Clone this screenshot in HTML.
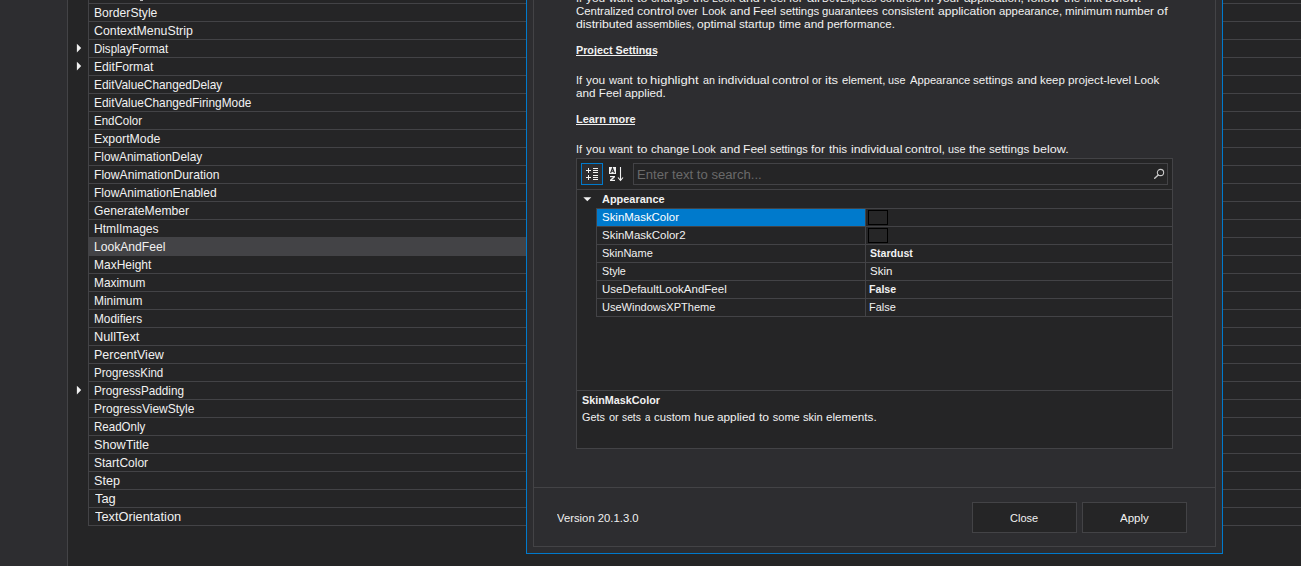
<!DOCTYPE html>
<html><head><meta charset="utf-8"><title>Look and Feel Settings</title>
<style>
html,body{margin:0;padding:0}
body{width:1301px;height:566px;overflow:hidden;background:#252526;position:relative;font-family:"Liberation Sans",sans-serif;}
div{box-sizing:border-box}
.a{position:absolute}
.t{position:absolute;white-space:pre;line-height:20px;height:20px;transform-origin:0 0;font-family:"Liberation Sans",sans-serif;}
</style></head><body>
<!-- left environment strip -->
<div class="a" style="left:0;top:0;width:67px;height:566px;background:#2d2d30"></div>
<div class="a" style="left:67px;top:0;width:1px;height:566px;background:#434346"></div>
<!-- property grid behind dialog -->
<div class="a" style="left:88px;top:3px;width:1213px;height:523px;background:repeating-linear-gradient(to bottom,#434346 0,#434346 1px,transparent 1px,transparent 18px)"></div>
<div class="a" style="left:88px;top:0;width:1px;height:526px;background:#434346"></div>
<div class="a" style="left:88px;top:237px;width:440px;height:19px;background:#434346"></div>
<div class="a" style="left:140px;top:0;width:3px;height:1px;background:#bdbdbd"></div>
<!-- expand arrows -->
<svg class="a" style="left:76px;top:43px" width="8" height="12"><path d="M0.9 0.8 L0.9 9.4 L5.2 5.1 Z" fill="#f1f1f1"/></svg>
<svg class="a" style="left:76px;top:61px" width="8" height="12"><path d="M0.9 0.8 L0.9 9.4 L5.2 5.1 Z" fill="#f1f1f1"/></svg>
<svg class="a" style="left:76px;top:385px" width="8" height="12"><path d="M0.9 0.8 L0.9 9.4 L5.2 5.1 Z" fill="#f1f1f1"/></svg>
<!-- dialog -->
<div class="a" style="left:526px;top:-10px;width:697px;height:564px;background:#2d2d30;border:1px solid #007acc"></div>
<div class="a" style="left:533px;top:-10px;width:683px;height:557px;border:1px solid #434346"></div>
<div class="a" style="left:533px;top:487px;width:683px;height:1px;background:#434346"></div>
<!-- embedded property grid -->
<div class="a" style="left:576px;top:158px;width:597px;height:291px;background:#252526;border:1px solid #434346"></div>
<div class="a" style="left:577px;top:189px;width:595px;height:1px;background:#434346"></div>
<!-- toolbar: categorized button -->
<div class="a" style="left:581px;top:163px;width:22px;height:22px;background:#2d2d30;border:1px solid #007acc"></div>
<svg class="a" style="left:581px;top:163px" width="22" height="22" shape-rendering="crispEdges">
 <g fill="#f1f1f1">
  <rect x="5" y="7" width="5" height="1"/><rect x="7" y="5" width="1" height="5"/>
  <rect x="12" y="5" width="5" height="1"/><rect x="12" y="7" width="5" height="1"/><rect x="12" y="9" width="5" height="1"/>
  <rect x="5" y="14" width="5" height="1"/><rect x="7" y="12" width="1" height="5"/>
  <rect x="12" y="12" width="5" height="1"/><rect x="12" y="14" width="5" height="1"/><rect x="12" y="16" width="5" height="1"/>
 </g>
</svg>
<!-- toolbar: A-Z sort -->
<svg class="a" style="left:607px;top:163px" width="20" height="22">
 <rect x="2" y="4" width="7" height="7" fill="#f1f1f1"/>
 <path d="M3.6 10 L5.5 5 L7.4 10 M4.4 8.3 L6.6 8.3" stroke="#252526" stroke-width="1.1" fill="none"/>
 <rect x="3" y="13" width="5" height="1.2" fill="#f1f1f1"/><rect x="3" y="16.8" width="5" height="1.2" fill="#f1f1f1"/><path d="M7.4 13.8 L3.6 17.2" stroke="#f1f1f1" stroke-width="1.5" fill="none"/>
 <path d="M13.5 4 L13.5 17.5 M11 14.5 L13.5 17.5 L16 14.5" stroke="#f1f1f1" stroke-width="1.1" fill="none"/>
</svg>
<!-- search box -->
<div class="a" style="left:633px;top:163px;width:535px;height:22px;border:1px solid #434346"></div>
<svg class="a" style="left:1150px;top:165px" width="18" height="18">
 <circle cx="10.5" cy="7.5" r="3.15" stroke="#c8c8c8" stroke-width="1.1" fill="none"/>
 <path d="M8.2 9.9 L4.7 13.3" stroke="#c8c8c8" stroke-width="1.4" stroke-linecap="round"/>
</svg>
<!-- category row -->
<svg class="a" style="left:582px;top:196px" width="12" height="8"><path d="M1.3 1.3 L9.3 1.3 L5.3 5.3 Z" fill="#f1f1f1"/></svg>
<!-- rows -->
<div class="a" style="left:596px;top:208px;width:576px;height:109px;border-left:1px solid #434346;background:repeating-linear-gradient(to bottom,#434346 0,#434346 1px,transparent 1px,transparent 18px)"></div>
<div class="a" style="left:865px;top:208px;width:1px;height:109px;background:#434346"></div>
<div class="a" style="left:597px;top:209px;width:268px;height:17px;background:#007acc"></div>
<!-- color swatches -->
<div class="a" style="left:868px;top:210px;width:20px;height:15px;background:#262627;border:1px solid #000"></div>
<div class="a" style="left:868px;top:228px;width:20px;height:15px;background:#262627;border:1px solid #000"></div>
<!-- description splitter -->
<div class="a" style="left:577px;top:390px;width:595px;height:1px;background:#434346"></div>
<!-- buttons -->
<div class="a" style="left:972px;top:502px;width:105px;height:31px;background:#252526;border:1px solid #434346"></div>
<div class="a" style="left:1082px;top:502px;width:105px;height:31px;background:#252526;border:1px solid #434346"></div>
<div class="t" style="left:93.67px;top:3.00px;font-size:13px;font-weight:400;color:#f1f1f1;transform:scaleX(0.9326)">BorderStyle</div>
<div class="t" style="left:94.01px;top:21.00px;font-size:13px;font-weight:400;color:#f1f1f1;transform:scaleX(0.9497)">ContextMenuStrip</div>
<div class="t" style="left:93.71px;top:39.00px;font-size:13px;font-weight:400;color:#f1f1f1;transform:scaleX(0.8858)">DisplayFormat</div>
<div class="t" style="left:93.67px;top:57.00px;font-size:13px;font-weight:400;color:#f1f1f1;transform:scaleX(0.9328)">EditFormat</div>
<div class="t" style="left:93.69px;top:75.00px;font-size:13px;font-weight:400;color:#f1f1f1;transform:scaleX(0.9117)">EditValueChangedDelay</div>
<div class="t" style="left:93.69px;top:93.00px;font-size:13px;font-weight:400;color:#f1f1f1;transform:scaleX(0.9124)">EditValueChangedFiringMode</div>
<div class="t" style="left:93.72px;top:111.00px;font-size:13px;font-weight:400;color:#f1f1f1;transform:scaleX(0.8849)">EndColor</div>
<div class="t" style="left:93.65px;top:129.00px;font-size:13px;font-weight:400;color:#f1f1f1;transform:scaleX(0.9474)">ExportMode</div>
<div class="t" style="left:93.69px;top:147.00px;font-size:13px;font-weight:400;color:#f1f1f1;transform:scaleX(0.9132)">FlowAnimationDelay</div>
<div class="t" style="left:93.67px;top:165.00px;font-size:13px;font-weight:400;color:#f1f1f1;transform:scaleX(0.9336)">FlowAnimationDuration</div>
<div class="t" style="left:93.68px;top:183.00px;font-size:13px;font-weight:400;color:#f1f1f1;transform:scaleX(0.9220)">FlowAnimationEnabled</div>
<div class="t" style="left:94.02px;top:201.00px;font-size:13px;font-weight:400;color:#f1f1f1;transform:scaleX(0.9337)">GenerateMember</div>
<div class="t" style="left:93.67px;top:219.00px;font-size:13px;font-weight:400;color:#f1f1f1;transform:scaleX(0.9326)">HtmlImages</div>
<div class="t" style="left:93.67px;top:237.00px;font-size:13px;font-weight:400;color:#f1f1f1;transform:scaleX(0.9324)">LookAndFeel</div>
<div class="t" style="left:93.68px;top:255.00px;font-size:13px;font-weight:400;color:#f1f1f1;transform:scaleX(0.9230)">MaxHeight</div>
<div class="t" style="left:93.69px;top:273.00px;font-size:13px;font-weight:400;color:#f1f1f1;transform:scaleX(0.9119)">Maximum</div>
<div class="t" style="left:93.68px;top:291.00px;font-size:13px;font-weight:400;color:#f1f1f1;transform:scaleX(0.9179)">Minimum</div>
<div class="t" style="left:93.69px;top:309.00px;font-size:13px;font-weight:400;color:#f1f1f1;transform:scaleX(0.9112)">Modifiers</div>
<div class="t" style="left:93.62px;top:327.00px;font-size:13px;font-weight:400;color:#f1f1f1;transform:scaleX(0.9817)">NullText</div>
<div class="t" style="left:93.64px;top:345.00px;font-size:13px;font-weight:400;color:#f1f1f1;transform:scaleX(0.9603)">PercentView</div>
<div class="t" style="left:93.71px;top:363.00px;font-size:13px;font-weight:400;color:#f1f1f1;transform:scaleX(0.8879)">ProgressKind</div>
<div class="t" style="left:93.70px;top:381.00px;font-size:13px;font-weight:400;color:#f1f1f1;transform:scaleX(0.9022)">ProgressPadding</div>
<div class="t" style="left:93.68px;top:399.00px;font-size:13px;font-weight:400;color:#f1f1f1;transform:scaleX(0.9221)">ProgressViewStyle</div>
<div class="t" style="left:93.71px;top:417.00px;font-size:13px;font-weight:400;color:#f1f1f1;transform:scaleX(0.8863)">ReadOnly</div>
<div class="t" style="left:93.99px;top:435.00px;font-size:13px;font-weight:400;color:#f1f1f1;transform:scaleX(0.9734)">ShowTitle</div>
<div class="t" style="left:94.02px;top:453.00px;font-size:13px;font-weight:400;color:#f1f1f1;transform:scaleX(0.9249)">StartColor</div>
<div class="t" style="left:93.99px;top:471.00px;font-size:13px;font-weight:400;color:#f1f1f1;transform:scaleX(0.9686)">Step</div>
<div class="t" style="left:94.95px;top:489.00px;font-size:13px;font-weight:400;color:#f1f1f1;transform:scaleX(0.9912)">Tag</div>
<div class="t" style="left:94.95px;top:507.00px;font-size:13px;font-weight:400;color:#f1f1f1;transform:scaleX(0.9852)">TextOrientation</div>
<div class="t" style="left:576.40px;top:-12.00px;font-size:11px;font-weight:400;color:#f1f1f1;transform:scaleX(0.9951)">If</div>
<div class="t" style="left:586.06px;top:-12.00px;font-size:11px;font-weight:400;color:#f1f1f1;transform:scaleX(1.0844)">you</div>
<div class="t" style="left:609.00px;top:-12.00px;font-size:11px;font-weight:400;color:#f1f1f1;transform:scaleX(1.0119)">want</div>
<div class="t" style="left:636.76px;top:-12.00px;font-size:11px;font-weight:400;color:#f1f1f1;transform:scaleX(1.1362)">to</div>
<div class="t" style="left:650.67px;top:-12.00px;font-size:11px;font-weight:400;color:#f1f1f1;transform:scaleX(1.0591)">change</div>
<div class="t" style="left:692.77px;top:-12.00px;font-size:11px;font-weight:400;color:#f1f1f1;transform:scaleX(1.0712)">the</div>
<div class="t" style="left:712.36px;top:-12.00px;font-size:11px;font-weight:400;color:#f1f1f1;transform:scaleX(0.9609)">Look</div>
<div class="t" style="left:739.23px;top:-12.00px;font-size:11px;font-weight:400;color:#f1f1f1;transform:scaleX(1.1328)">and</div>
<div class="t" style="left:762.76px;top:-12.00px;font-size:11px;font-weight:400;color:#f1f1f1;transform:scaleX(1.0734)">Feel</div>
<div class="t" style="left:789.27px;top:-12.00px;font-size:11px;font-weight:400;color:#f1f1f1;transform:scaleX(1.0640)">for</div>
<div class="t" style="left:806.61px;top:-12.00px;font-size:11px;font-weight:400;color:#f1f1f1;transform:scaleX(1.1795)">all</div>
<div class="t" style="left:822.40px;top:-12.00px;font-size:11px;font-weight:400;color:#f1f1f1;transform:scaleX(0.9172)">DevExpress</div>
<div class="t" style="left:880.37px;top:-12.00px;font-size:11px;font-weight:400;color:#f1f1f1;transform:scaleX(1.0525)">controls</div>
<div class="t" style="left:924.17px;top:-12.00px;font-size:11px;font-weight:400;color:#f1f1f1;transform:scaleX(1.1088)">in</div>
<div class="t" style="left:937.26px;top:-12.00px;font-size:11px;font-weight:400;color:#f1f1f1;transform:scaleX(1.0840)">your</div>
<div class="t" style="left:964.26px;top:-12.00px;font-size:11px;font-weight:400;color:#f1f1f1;transform:scaleX(1.0753)">application,</div>
<div class="t" style="left:1027.36px;top:-12.00px;font-size:11px;font-weight:400;color:#f1f1f1;transform:scaleX(1.1571)">follow</div>
<div class="t" style="left:1064.27px;top:-12.00px;font-size:11px;font-weight:400;color:#f1f1f1;transform:scaleX(1.0644)">the</div>
<div class="t" style="left:1083.79px;top:-12.00px;font-size:11px;font-weight:400;color:#f1f1f1;transform:scaleX(1.0794)">link</div>
<div class="t" style="left:1105.22px;top:-12.00px;font-size:11px;font-weight:400;color:#f1f1f1;transform:scaleX(1.1711)">below.</div>
<div class="t" style="left:576.08px;top:1.00px;font-size:11px;font-weight:400;color:#f1f1f1;transform:scaleX(1.0367)">Centralized</div>
<div class="t" style="left:637.04px;top:1.00px;font-size:11px;font-weight:400;color:#f1f1f1;transform:scaleX(1.1276)">control</div>
<div class="t" style="left:677.41px;top:1.00px;font-size:11px;font-weight:400;color:#f1f1f1;transform:scaleX(0.9783)">over</div>
<div class="t" style="left:701.82px;top:1.00px;font-size:11px;font-weight:400;color:#f1f1f1;transform:scaleX(1.0043)">Look</div>
<div class="t" style="left:729.75px;top:1.00px;font-size:11px;font-weight:400;color:#f1f1f1;transform:scaleX(1.1036)">and</div>
<div class="t" style="left:752.74px;top:1.00px;font-size:11px;font-weight:400;color:#f1f1f1;transform:scaleX(1.0987)">Feel</div>
<div class="t" style="left:779.51px;top:1.00px;font-size:11px;font-weight:400;color:#f1f1f1;transform:scaleX(1.0343)">settings</div>
<div class="t" style="left:822.29px;top:1.00px;font-size:11px;font-weight:400;color:#f1f1f1;transform:scaleX(1.0217)">guarantees</div>
<div class="t" style="left:882.07px;top:1.00px;font-size:11px;font-weight:400;color:#f1f1f1;transform:scaleX(1.0510)">consistent</div>
<div class="t" style="left:938.05px;top:1.00px;font-size:11px;font-weight:400;color:#f1f1f1;transform:scaleX(1.0998)">application</div>
<div class="t" style="left:999.08px;top:1.00px;font-size:11px;font-weight:400;color:#f1f1f1;transform:scaleX(1.0314)">appearance,</div>
<div class="t" style="left:1064.81px;top:1.00px;font-size:11px;font-weight:400;color:#f1f1f1;transform:scaleX(1.0551)">minimum</div>
<div class="t" style="left:1114.82px;top:1.00px;font-size:11px;font-weight:400;color:#f1f1f1;transform:scaleX(1.0419)">number</div>
<div class="t" style="left:1157.42px;top:1.00px;font-size:11px;font-weight:400;color:#f1f1f1;transform:scaleX(1.1657)">of</div>
<div class="t" style="left:576.04px;top:14.00px;font-size:11px;font-weight:400;color:#f1f1f1;transform:scaleX(1.1172)">distributed</div>
<div class="t" style="left:635.90px;top:14.00px;font-size:11px;font-weight:400;color:#f1f1f1;transform:scaleX(1.0031)">assemblies,</div>
<div class="t" style="left:697.15px;top:14.00px;font-size:11px;font-weight:400;color:#f1f1f1;transform:scaleX(1.0978)">optimal</div>
<div class="t" style="left:739.40px;top:14.00px;font-size:11px;font-weight:400;color:#f1f1f1;transform:scaleX(1.0656)">startup</div>
<div class="t" style="left:779.07px;top:14.00px;font-size:11px;font-weight:400;color:#f1f1f1;transform:scaleX(1.0534)">time</div>
<div class="t" style="left:804.36px;top:14.00px;font-size:11px;font-weight:400;color:#f1f1f1;transform:scaleX(1.0861)">and</div>
<div class="t" style="left:827.21px;top:14.00px;font-size:11px;font-weight:400;color:#f1f1f1;transform:scaleX(1.0476)">performance.</div>
<div class="t" style="left:575.67px;top:40.00px;font-size:11px;font-weight:700;color:#f1f1f1;transform:scaleX(0.9782)">Project Settings</div>
<div style="position:absolute;left:576.2px;top:55px;width:81.0px;height:1px;background:#f1f1f1"></div>
<div class="t" style="left:576.40px;top:70.00px;font-size:11px;font-weight:400;color:#f1f1f1;transform:scaleX(0.9951)">If</div>
<div class="t" style="left:586.06px;top:70.00px;font-size:11px;font-weight:400;color:#f1f1f1;transform:scaleX(1.0844)">you</div>
<div class="t" style="left:609.00px;top:70.00px;font-size:11px;font-weight:400;color:#f1f1f1;transform:scaleX(1.0119)">want</div>
<div class="t" style="left:636.76px;top:70.00px;font-size:11px;font-weight:400;color:#f1f1f1;transform:scaleX(1.1362)">to</div>
<div class="t" style="left:650.31px;top:70.00px;font-size:11px;font-weight:400;color:#f1f1f1;transform:scaleX(1.1838)">highlight</div>
<div class="t" style="left:702.71px;top:70.00px;font-size:11px;font-weight:400;color:#f1f1f1;transform:scaleX(0.9727)">an</div>
<div class="t" style="left:717.56px;top:70.00px;font-size:11px;font-weight:400;color:#f1f1f1;transform:scaleX(1.1223)">individual</div>
<div class="t" style="left:772.14px;top:70.00px;font-size:11px;font-weight:400;color:#f1f1f1;transform:scaleX(1.1213)">control</div>
<div class="t" style="left:812.31px;top:70.00px;font-size:11px;font-weight:400;color:#f1f1f1;transform:scaleX(0.9863)">or</div>
<div class="t" style="left:825.41px;top:70.00px;font-size:11px;font-weight:400;color:#f1f1f1;transform:scaleX(1.1848)">its</div>
<div class="t" style="left:841.99px;top:70.00px;font-size:11px;font-weight:400;color:#f1f1f1;transform:scaleX(1.0258)">element,</div>
<div class="t" style="left:888.06px;top:70.00px;font-size:11px;font-weight:400;color:#f1f1f1;transform:scaleX(0.9818)">use</div>
<div class="t" style="left:909.50px;top:70.00px;font-size:11px;font-weight:400;color:#f1f1f1;transform:scaleX(1.0157)">Appearance</div>
<div class="t" style="left:973.41px;top:70.00px;font-size:11px;font-weight:400;color:#f1f1f1;transform:scaleX(1.0532)">settings</div>
<div class="t" style="left:1016.85px;top:70.00px;font-size:11px;font-weight:400;color:#f1f1f1;transform:scaleX(1.0920)">and</div>
<div class="t" style="left:1039.82px;top:70.00px;font-size:11px;font-weight:400;color:#f1f1f1;transform:scaleX(1.0431)">keep</div>
<div class="t" style="left:1067.90px;top:70.00px;font-size:11px;font-weight:400;color:#f1f1f1;transform:scaleX(1.0649)">project-level</div>
<div class="t" style="left:1133.77px;top:70.00px;font-size:11px;font-weight:400;color:#f1f1f1;transform:scaleX(1.0652)">Look</div>
<div class="t" style="left:575.87px;top:83.00px;font-size:11px;font-weight:400;color:#f1f1f1;transform:scaleX(1.0643)">and Feel applied.</div>
<div class="t" style="left:575.65px;top:109.00px;font-size:11px;font-weight:700;color:#f1f1f1;transform:scaleX(0.9957)">Learn more</div>
<div style="position:absolute;left:576.2px;top:124px;width:58.8px;height:1px;background:#f1f1f1"></div>
<div class="t" style="left:576.40px;top:139.00px;font-size:11px;font-weight:400;color:#f1f1f1;transform:scaleX(0.9951)">If</div>
<div class="t" style="left:586.06px;top:139.00px;font-size:11px;font-weight:400;color:#f1f1f1;transform:scaleX(1.0844)">you</div>
<div class="t" style="left:609.00px;top:139.00px;font-size:11px;font-weight:400;color:#f1f1f1;transform:scaleX(1.0119)">want</div>
<div class="t" style="left:636.76px;top:139.00px;font-size:11px;font-weight:400;color:#f1f1f1;transform:scaleX(1.1362)">to</div>
<div class="t" style="left:650.67px;top:139.00px;font-size:11px;font-weight:400;color:#f1f1f1;transform:scaleX(1.0591)">change</div>
<div class="t" style="left:692.03px;top:139.00px;font-size:11px;font-weight:400;color:#f1f1f1;transform:scaleX(0.9957)">Look</div>
<div class="t" style="left:719.75px;top:139.00px;font-size:11px;font-weight:400;color:#f1f1f1;transform:scaleX(1.1036)">and</div>
<div class="t" style="left:742.74px;top:139.00px;font-size:11px;font-weight:400;color:#f1f1f1;transform:scaleX(1.0987)">Feel</div>
<div class="t" style="left:769.53px;top:139.00px;font-size:11px;font-weight:400;color:#f1f1f1;transform:scaleX(0.9939)">settings</div>
<div class="t" style="left:811.16px;top:139.00px;font-size:11px;font-weight:400;color:#f1f1f1;transform:scaleX(1.0880)">for</div>
<div class="t" style="left:829.27px;top:139.00px;font-size:11px;font-weight:400;color:#f1f1f1;transform:scaleX(1.0586)">this</div>
<div class="t" style="left:850.66px;top:139.00px;font-size:11px;font-weight:400;color:#f1f1f1;transform:scaleX(1.1200)">individual</div>
<div class="t" style="left:905.15px;top:139.00px;font-size:11px;font-weight:400;color:#f1f1f1;transform:scaleX(1.1090)">control,</div>
<div class="t" style="left:947.86px;top:139.00px;font-size:11px;font-weight:400;color:#f1f1f1;transform:scaleX(0.9818)">use</div>
<div class="t" style="left:969.16px;top:139.00px;font-size:11px;font-weight:400;color:#f1f1f1;transform:scaleX(1.0847)">the</div>
<div class="t" style="left:989.40px;top:139.00px;font-size:11px;font-weight:400;color:#f1f1f1;transform:scaleX(1.0613)">settings</div>
<div class="t" style="left:1032.84px;top:139.00px;font-size:11px;font-weight:400;color:#f1f1f1;transform:scaleX(1.1438)">below.</div>
<div class="t" style="left:636.61px;top:165.00px;font-size:12px;font-weight:400;color:#6a6a6a;transform:scaleX(1.0937)">Enter text to search...</div>
<div class="t" style="left:601.65px;top:189.00px;font-size:11px;font-weight:700;color:#f1f1f1;transform:scaleX(0.9940)">Appearance</div>
<div class="t" style="left:602.08px;top:207.00px;font-size:11px;font-weight:400;color:#ffffff;transform:scaleX(1.0403)">SkinMaskColor</div>
<div class="t" style="left:602.08px;top:225.00px;font-size:11px;font-weight:400;color:#f1f1f1;transform:scaleX(1.0430)">SkinMaskColor2</div>
<div class="t" style="left:602.10px;top:243.00px;font-size:11px;font-weight:400;color:#f1f1f1;transform:scaleX(1.0010)">SkinName</div>
<div class="t" style="left:602.11px;top:261.00px;font-size:11px;font-weight:400;color:#f1f1f1;transform:scaleX(0.9745)">Style</div>
<div class="t" style="left:601.69px;top:279.00px;font-size:11px;font-weight:400;color:#f1f1f1;transform:scaleX(1.0457)">UseDefaultLookAndFeel</div>
<div class="t" style="left:601.72px;top:297.00px;font-size:11px;font-weight:400;color:#f1f1f1;transform:scaleX(1.0022)">UseWindowsXPTheme</div>
<div class="t" style="left:869.84px;top:243.00px;font-size:11px;font-weight:700;color:#f1f1f1;transform:scaleX(0.9609)">Stardust</div>
<div class="t" style="left:869.68px;top:261.00px;font-size:11px;font-weight:400;color:#f1f1f1;transform:scaleX(1.0469)">Skin</div>
<div class="t" style="left:869.48px;top:279.00px;font-size:11px;font-weight:700;color:#f1f1f1;transform:scaleX(0.9667)">False</div>
<div class="t" style="left:869.33px;top:297.00px;font-size:11px;font-weight:400;color:#f1f1f1;transform:scaleX(0.9961)">False</div>
<div class="t" style="left:582.33px;top:390.00px;font-size:11px;font-weight:700;color:#f1f1f1;transform:scaleX(0.9813)">SkinMaskColor</div>
<div class="t" style="left:582.11px;top:407.00px;font-size:11px;font-weight:400;color:#f1f1f1;transform:scaleX(0.9832)">Gets</div>
<div class="t" style="left:608.60px;top:407.00px;font-size:11px;font-weight:400;color:#f1f1f1;transform:scaleX(0.9973)">or</div>
<div class="t" style="left:622.35px;top:407.00px;font-size:11px;font-weight:400;color:#f1f1f1;transform:scaleX(0.9342)">sets</div>
<div class="t" style="left:644.86px;top:407.00px;font-size:11px;font-weight:400;color:#f1f1f1;transform:scaleX(0.8889)">a</div>
<div class="t" style="left:654.28px;top:407.00px;font-size:11px;font-weight:400;color:#f1f1f1;transform:scaleX(1.0307)">custom</div>
<div class="t" style="left:693.77px;top:407.00px;font-size:11px;font-weight:400;color:#f1f1f1;transform:scaleX(1.1036)">hue</div>
<div class="t" style="left:717.46px;top:407.00px;font-size:11px;font-weight:400;color:#f1f1f1;transform:scaleX(1.0715)">applied</div>
<div class="t" style="left:759.06px;top:407.00px;font-size:11px;font-weight:400;color:#f1f1f1;transform:scaleX(1.1014)">to</div>
<div class="t" style="left:772.83px;top:407.00px;font-size:11px;font-weight:400;color:#f1f1f1;transform:scaleX(1.0000)">some</div>
<div class="t" style="left:803.32px;top:407.00px;font-size:11px;font-weight:400;color:#f1f1f1;transform:scaleX(1.0108)">skin</div>
<div class="t" style="left:826.37px;top:407.00px;font-size:11px;font-weight:400;color:#f1f1f1;transform:scaleX(1.0623)">elements.</div>
<div class="t" style="left:556.67px;top:508.00px;font-size:11px;font-weight:400;color:#f1f1f1;transform:scaleX(1.0266)">Version 20.1.3.0</div>
<div class="t" style="left:1010.10px;top:508.00px;font-size:11px;font-weight:400;color:#f1f1f1;transform:scaleX(0.9991)">Close</div>
<div class="t" style="left:1120.40px;top:508.00px;font-size:11px;font-weight:400;color:#f1f1f1;transform:scaleX(1.0473)">Apply</div>
</body></html>
